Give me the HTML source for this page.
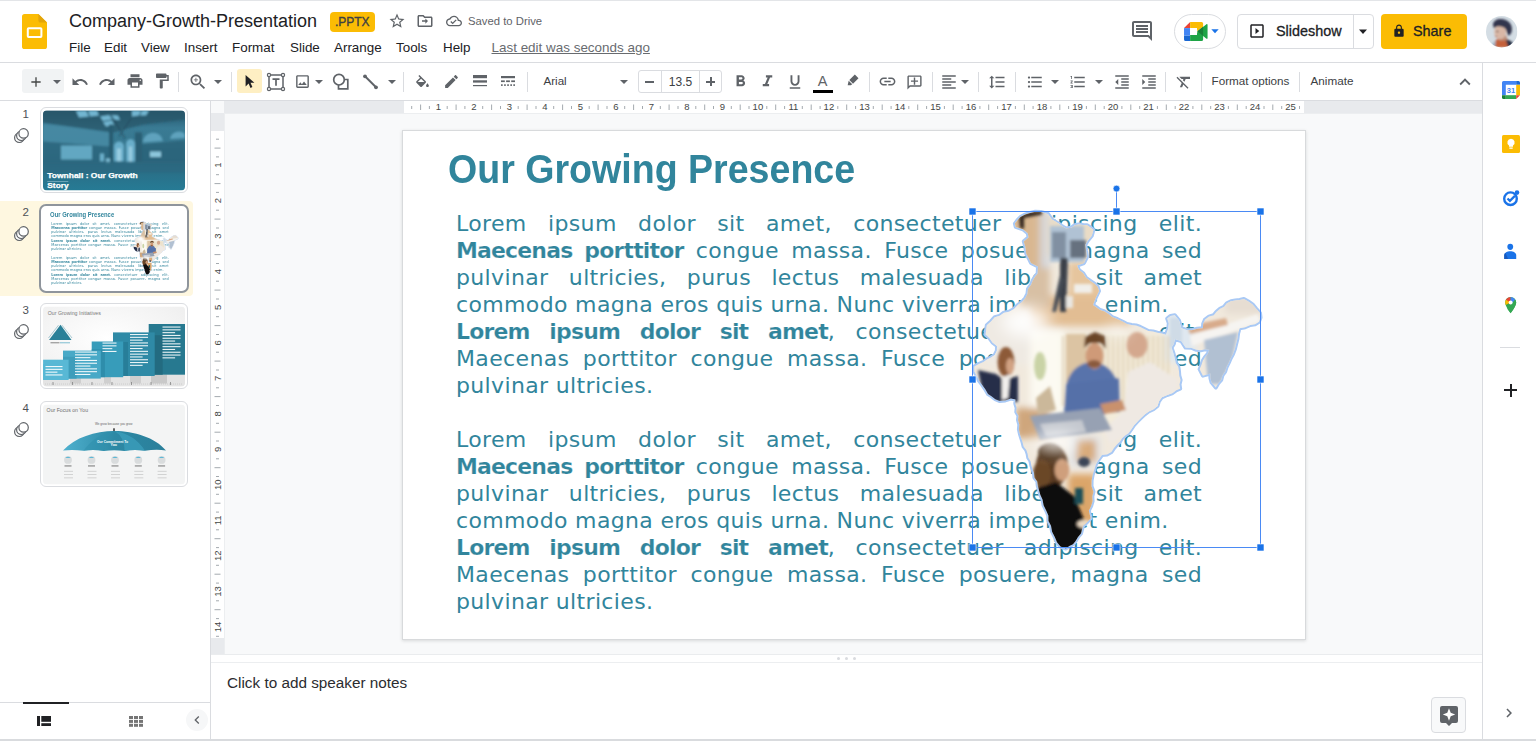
<!DOCTYPE html>
<html lang="en">
<head>
<meta charset="utf-8">
<title>Company-Growth-Presentation - Google Slides</title>
<style>
*{box-sizing:border-box;margin:0;padding:0}
html,body{width:1536px;height:741px;overflow:hidden;background:#fff}
body{position:relative;font-family:"Liberation Sans",Arial,sans-serif;color:#202124;-webkit-font-smoothing:antialiased}
.abs{position:absolute}
svg{display:block;overflow:visible}
/* ---------- header ---------- */
#topline{left:0;top:0;width:1536px;height:1px;background:#e3e5e8}
#header{left:0;top:0;width:1536px;height:62px;background:#fff}
#hdrline{left:0;top:62px;width:1536px;height:1px;background:#dadce0}
#doctitle{left:69px;top:10.4px;font-size:18px;line-height:22px;color:#202124;white-space:nowrap}
#badge{left:330px;top:12px;width:44.5px;height:20px;border-radius:4px;background:#fbbc04;color:#3c4043;font-size:12px;font-weight:normal;-webkit-text-stroke:.35px #3c4043;line-height:21.4px;text-align:center;letter-spacing:0}
#saved{left:468px;top:14px;font-size:11.3px;line-height:14px;color:#5f6368;white-space:nowrap}
.menu{top:39.8px;font-size:13.4px;line-height:16px;color:#202124;white-space:nowrap}
#lastedit{left:491.5px;top:39.8px;font-size:13.45px;line-height:16px;color:#686b6f;text-decoration:underline;white-space:nowrap}
/* ---------- toolbar ---------- */
#toolbar{left:0;top:63px;width:1482px;height:37px;background:#fff}
#tbline{left:0;top:100px;width:1482px;height:1px;background:#dadce0}
.sep{top:72px;width:1px;height:20px;background:#dadce0}
.tbtxt{font-size:12px;line-height:14px;color:#3c4043;white-space:nowrap}
/* ---------- filmstrip ---------- */
#film{left:0;top:101px;width:210px;height:640px;background:#fff}
#filmborder{left:210px;top:101px;width:1px;height:640px;background:#dadce0}
.num{width:29px;text-align:right;font-size:11.5px;line-height:14px;color:#4d5156}
.thumbbox{width:148px;height:86px;border:1px solid #dadce0;border-radius:6px;background:#fff}
.thumbimg{width:142px;height:80px;border-radius:4px;overflow:hidden}
/* ---------- canvas ---------- */
#canvas{left:211px;top:101px;width:1271px;height:554px;background:#f8f9fa}
#slide{left:403px;top:131px;width:902px;height:507.6px;background:#fff;box-shadow:0 0 0 1px #d8dadc,0 1px 3px 1px rgba(60,64,67,.17)}
.bl{position:absolute;left:53px;width:746px;height:27px;font-family:"DejaVu Sans","Liberation Sans",sans-serif;font-size:22px;line-height:27px;color:#31859c;white-space:nowrap;text-align:justify;text-align-last:justify;letter-spacing:.35px}
.bl.last{text-align:left;text-align-last:left}
.bl b{letter-spacing:-.85px;font-weight:bold;-webkit-text-stroke:.2px #fff}
.stitle{position:absolute;left:44.6px;top:16.2px;font-family:"Liberation Sans",Arial,sans-serif;font-weight:bold;font-size:40.1px;line-height:44px;color:#31859c;white-space:nowrap;transform:scaleX(.9375);transform-origin:0 0}
.mini{position:absolute;left:0;top:0;width:902px;height:507px;transform:scale(.15743);transform-origin:0 0}
/* ---------- notes ---------- */
#notes{left:211px;top:655px;width:1271px;height:86px;background:#fff}
/* ---------- side panel ---------- */
#side{left:1483px;top:63px;width:53px;height:678px;background:#fff}
#sideborder{left:1482px;top:63px;width:1px;height:678px;background:#dadce0}
#bottomline{left:0;top:739px;width:1536px;height:2px;background:#d9dbde}
</style>
</head>
<body>
<div class="abs" id="header"></div>
<div class="abs" id="topline"></div>
<div class="abs" id="hdrline"></div>
<!-- slides logo -->
<svg class="abs" style="left:22px;top:14px" width="25" height="35" viewBox="0 0 25 35">
  <path d="M2.6 0H16.4L25 8.6V32.4a2.6 2.6 0 0 1-2.6 2.6H2.6A2.6 2.6 0 0 1 0 32.4V2.600a2.6 2.6 0 0 1 2.600-2.600z" fill="#fbbc04"/>
  <path d="M16.4 0L25 8.600H18.600a2.200 2.200 0 0 1-2.200-2.200z" fill="#e2a50a"/>
  <rect x="5.800" y="14.300" width="13.600" height="8.800" rx="0.800" fill="none" stroke="#fff" stroke-width="2"/>
</svg>
<div class="abs" id="doctitle">Company-Growth-Presentation</div>
<div class="abs" id="badge">.PPTX</div>
<svg class="abs" style="left:388px;top:12px" width="18" height="18" viewBox="0 0 24 24" fill="#5f6368"><path d="M22 9.240l-7.190-.62L12 2 9.190 8.630 2 9.240l5.460 4.730L5.820 21 12 17.270 18.180 21l-1.630-7.030L22 9.240zM12 15.400l-3.760 2.270 1-4.280-3.320-2.880 4.380-.38L12 6.100l1.710 4.040 4.380.38-3.320 2.880 1 4.280L12 15.400z"/></svg>
<svg class="abs" style="left:416px;top:12px" width="18" height="18" viewBox="0 0 24 24" fill="#5f6368"><path d="M20 6h-8l-2-2H4c-1.100 0-2 .9-2 2v12c0 1.100.9 2 2 2h16c1.100 0 2-.9 2-2V8c0-1.100-.9-2-2-2zm0 12H4V6h5.170l2 2H20v10zm-7.500-2.500l3.500-3.500-3.500-3.500v2.500H8v2h4.500v2.500z"/></svg>
<svg class="abs" style="left:446px;top:13.200px" width="16" height="16" viewBox="0 0 24 24" fill="#5f6368"><path d="M19.350 10.040C18.670 6.590 15.640 4 12 4 9.110 4 6.600 5.640 5.350 8.040 2.340 8.360 0 10.910 0 14c0 3.310 2.690 6 6 6h13c2.760 0 5-2.240 5-5 0-2.640-2.050-4.780-4.650-4.960zM19 18H6c-2.210 0-4-1.790-4-4 0-2.050 1.530-3.760 3.560-3.970l1.070-.11.5-.95C8.080 7.140 9.940 6 12 6c2.620 0 4.880 1.860 5.390 4.430l.3 1.500 1.530.11c1.560.1 2.780 1.410 2.780 2.960 0 1.650-1.350 3-3 3zm-9-3.820l-2.090-2.090L6.500 13.500 10 17l6.010-6.010-1.410-1.410z"/></svg>
<div class="abs" id="saved">Saved to Drive</div>
<div class="abs menu" style="left:69px">File</div>
<div class="abs menu" style="left:104px">Edit</div>
<div class="abs menu" style="left:141px">View</div>
<div class="abs menu" style="left:184px">Insert</div>
<div class="abs menu" style="left:232px">Format</div>
<div class="abs menu" style="left:290px">Slide</div>
<div class="abs menu" style="left:334px">Arrange</div>
<div class="abs menu" style="left:396px">Tools</div>
<div class="abs menu" style="left:443px">Help</div>
<div class="abs" id="lastedit">Last edit was seconds ago</div>
<!-- right side of header -->
<svg class="abs" style="left:1130px;top:19px" width="24" height="24" viewBox="0 0 24 24" fill="#5f6368"><path d="M20 2H4c-1.100 0-2 .9-2 2v12c0 1.100.9 2 2 2h14l4 4V4c0-1.100-.9-2-2-2zm0 15.170L18.830 16H4V4h16v13.170zM6 6h12v2H6zm0 3h12v2H6zm0 3h12v2H6z"/></svg>
<div class="abs" style="left:1174px;top:14px;width:52px;height:35px;border:1px solid #dadce0;border-radius:18px;background:#fff"></div>
<!-- meet icon -->
<svg class="abs" style="left:1184px;top:22px" width="23.700" height="19" viewBox="0 0 24 19.300">
  <path d="M0 6.200L6.200 0V6.200z" fill="#ea4335"/>
  <path d="M6.200 0H17.800A1.600 1.600 0 0 1 19.400 1.600V4.800L13.600 9.400 13 6.200H6.200z" fill="#fbbc04"/>
  <path d="M0 6.200H6.200V13.900H0z" fill="#4285f4"/>
  <path d="M0 13.900H6.200V19.300H1.600A1.600 1.600 0 0 1 0 17.700z" fill="#1967d2"/>
  <path d="M6.200 13.200H13L13.600 9.400 22.800 2.200C23.300 1.800 23.900 2.100 23.900 2.700V16.400C23.900 17 23.300 17.300 22.800 16.900L19.400 14.200V17.700A1.600 1.600 0 0 1 17.800 19.300H6.200z" fill="#1ea446"/>
  <path d="M13.600 9.400L19.400 4.800V14.200z" fill="#188038"/>
  <rect x="6.200" y="6.200" width="6.900" height="7" fill="#fff"/>
</svg>
<svg class="abs" style="left:1211px;top:29px" width="8" height="5" viewBox="0 0 8 5"><path d="M.3 .3h7.400L4 4.300z" fill="#1a73e8"/></svg>
<div class="abs" style="left:1237px;top:14px;width:137px;height:35px;border:1px solid #dadce0;border-radius:4px;background:#fff"></div>
<div class="abs" style="left:1353px;top:15px;width:1px;height:33px;background:#dadce0"></div>
<svg class="abs" style="left:1248px;top:22px" width="18" height="18" viewBox="0 0 24 24" fill="#202124"><path d="M10 8v8l5-4-5-4zm9-5H5c-1.100 0-2 .9-2 2v14c0 1.100.9 2 2 2h14c1.100 0 2-.9 2-2V5c0-1.100-.9-2-2-2zm0 16H5V5h14v14z"/></svg>
<div class="abs" style="left:1276px;top:23px;font-size:14.400px;line-height:16px;color:#202124;white-space:nowrap;-webkit-text-stroke:.3px #202124">Slideshow</div>
<svg class="abs" style="left:1358px;top:29px" width="10" height="6" viewBox="0 0 10 6"><path d="M1 .5h8L5 5z" fill="#202124"/></svg>
<div class="abs" style="left:1381px;top:14px;width:86px;height:35px;border-radius:4px;background:#fbbc04"></div>
<svg class="abs" style="left:1392px;top:24px" width="14" height="14" viewBox="0 0 24 24" fill="#202124"><path d="M18 8h-1V6c0-2.760-2.240-5-5-5S7 3.240 7 6v2H6c-1.100 0-2 .9-2 2v10c0 1.100.9 2 2 2h12c1.100 0 2-.9 2-2V10c0-1.100-.9-2-2-2zm-6 9c-1.100 0-2-.9-2-2s.9-2 2-2 2 .9 2 2-.9 2-2 2zm3.100-9H8.900V6c0-1.710 1.390-3.100 3.100-3.100 1.710 0 3.100 1.390 3.100 3.100v2z"/></svg>
<div class="abs" style="left:1413px;top:23px;font-size:14.400px;line-height:16px;color:#202124;white-space:nowrap;-webkit-text-stroke:.3px #202124">Share</div>
<!-- avatar -->
<svg class="abs" style="left:1486px;top:16px" width="31.400" height="31.400" viewBox="0 0 31 31">
  <defs><clipPath id="avc"><circle cx="15.500" cy="15.500" r="15.500"/></clipPath>
  <filter id="avb" x="-20%" y="-20%" width="140%" height="140%"><feGaussianBlur stdDeviation=".8"/></filter></defs>
  <g clip-path="url(#avc)">
    <rect width="31" height="31" fill="#d4dde4"/>
    <g filter="url(#avb)">
      <path d="M8.500 31L9.500 24 14 21 20 22 25 26 27 31z" fill="#c5613b"/>
      <path d="M19 22L25.500 25.500 28 31H22z" fill="#2b3549"/>
      <path d="M6 28L9.500 24 9 31H5z" fill="#9fb4c6"/>
      <path d="M12 19h8l1 5-8 .5z" fill="#b98a74"/>
      <ellipse cx="14" cy="16" rx="5.800" ry="7" fill="#d9b7a6"/>
      <path d="M6.800 8.500C7.500 4 12 2 17 3.200S26 8 25.600 13.500C25.400 16.500 24 19 22 19.500L19.500 13C17 10.500 13 9.500 9.500 10.800L8 12.500z" fill="#33364e"/>
      <ellipse cx="11.200" cy="15.300" rx="1.100" ry=".8" fill="#4a3a3a"/>
      <ellipse cx="10" cy="20" rx="1.400" ry=".6" fill="#a8665a"/>
    </g>
  </g>
</svg>

<div class="abs" id="toolbar"></div><div class="abs" id="tbline"></div>
<div class="abs" style="left:22px;top:69px;width:42px;height:24px;border-radius:3px;background:#f1f3f4"></div>
<svg class="abs" style="left:27.5px;top:73.5px" width="16" height="16" viewBox="0 0 24 24" fill="#444746"><path d="M19 13h-6v6h-2v-6H5v-2h6V5h2v6h6v2z"/></svg>
<svg class="abs" style="left:52.5px;top:80.0px" width="8" height="4" viewBox="0 0 8 4"><path d="M0 0h8L4 4z" fill="#5f6368"/></svg>
<svg class="abs" style="left:71.0px;top:72.5px" width="18" height="18" viewBox="0 0 24 24" fill="#5f6368"><path d="M12.500 8c-2.650 0-5.050.99-6.900 2.600L2 7v9h9l-3.620-3.620c1.390-1.160 3.160-1.880 5.120-1.880 3.540 0 6.550 2.310 7.600 5.500l2.370-.78C21.080 11.030 17.150 8 12.500 8z"/></svg>
<svg class="abs" style="left:98.3px;top:72.5px" width="18" height="18" viewBox="0 0 24 24" fill="#5f6368"><path d="M18.400 10.600C16.550 8.990 14.150 8 11.500 8c-4.650 0-8.580 3.030-9.960 7.220L3.900 16c1.050-3.190 4.050-5.500 7.600-5.500 1.950 0 3.730.72 5.120 1.880L13 16h9V7l-3.600 3.600z"/></svg>
<svg class="abs" style="left:125.6px;top:72.4px" width="18" height="18" viewBox="0 0 24 24" fill="#5f6368"><path d="M19 8H5c-1.660 0-3 1.340-3 3v6h4v4h12v-4h4v-6c0-1.660-1.340-3-3-3zm-3 11H8v-5h8v5zm3-7c-.55 0-1-.45-1-1s.45-1 1-1 1 .45 1 1-.45 1-1 1zm-1-9H6v4h12V3z"/></svg>
<svg class="abs" style="left:153.0px;top:72.4px" width="18" height="18" viewBox="0 0 24 24" fill="#5f6368"><path d="M18 4V3c0-.55-.45-1-1-1H5c-.55 0-1 .45-1 1v4c0 .55.45 1 1 1h12c.55 0 1-.45 1-1V6h1v4H9v11c0 .55.45 1 1 1h2c.55 0 1-.45 1-1v-9h8V4h-3z"/></svg>
<div class="abs sep" style="left:178px"></div>
<svg class="abs" style="left:188.3px;top:72.3px" width="20" height="20" viewBox="0 0 24 24" fill="#5f6368"><path d="M15.500 14h-.79l-.28-.27C15.410 12.590 16 11.110 16 9.500 16 5.910 13.090 3 9.500 3S3 5.910 3 9.500 5.910 16 9.500 16c1.610 0 3.090-.59 4.230-1.570l.27.28v.79l5 4.990L20.490 19l-4.990-5zm-6 0C7.010 14 5 11.990 5 9.500S7.010 5 9.500 5 14 7.010 14 9.500 11.990 14 9.500 14zm2.500-4h-2v2H9v-2H7V9h2V7h1v2h2v1z"/></svg>
<svg class="abs" style="left:214.0px;top:80.0px" width="8" height="4" viewBox="0 0 8 4"><path d="M0 0h8L4 4z" fill="#5f6368"/></svg>
<div class="abs sep" style="left:231px"></div>
<div class="abs" style="left:237px;top:69px;width:25px;height:24px;border-radius:3px;background:#feefc3"></div>
<svg class="abs" style="left:240px;top:72px" width="18" height="18" viewBox="0 0 18 18"><path d="M5.600 3v11.400l3-2.800 1.900 4.300 1.900-.85-1.900-4.200h3.900z" fill="#202124"/></svg>
<svg class="abs" style="left:266px;top:71.500px" width="20" height="20" viewBox="0 0 20 20" fill="none" stroke="#5f6368"><rect x="3" y="3" width="14" height="14" stroke-width="1.500"/><g fill="#fff" stroke-width="1.200"><circle cx="3" cy="3" r="1.600"/><circle cx="17" cy="3" r="1.600"/><circle cx="3" cy="17" r="1.600"/><circle cx="17" cy="17" r="1.600"/></g><path d="M6.500 7.200h7M10 7.200v6.500" stroke-width="1.700"/></svg>
<svg class="abs" style="left:293.8px;top:73.0px" width="17" height="17" viewBox="0 0 24 24" fill="#5f6368"><path d="M19 5v14H5V5h14m0-2H5c-1.100 0-2 .9-2 2v14c0 1.100.9 2 2 2h14c1.100 0 2-.9 2-2V5c0-1.100-.9-2-2-2zm-4.860 8.860l-3 3.870L9 13.140 6 17h12l-3.860-5.140z"/></svg>
<svg class="abs" style="left:314.5px;top:80.0px" width="8" height="4" viewBox="0 0 8 4"><path d="M0 0h8L4 4z" fill="#5f6368"/></svg>
<svg class="abs" style="left:331px;top:72px" width="19" height="19" viewBox="0 0 19 19" fill="none" stroke="#5f6368" stroke-width="1.700"><path d="M7.500 12.500v4.300h9.300V7.500h-3"/><circle cx="8" cy="7.700" r="5.300" fill="#fff"/></svg>
<svg class="abs" style="left:361px;top:72px" width="19" height="19" viewBox="0 0 19 19"><path d="M4 4.300L15 15.300" stroke="#5f6368" stroke-width="2"/><circle cx="4" cy="4.300" r="1.900" fill="#5f6368"/><circle cx="15" cy="15.300" r="1.900" fill="#5f6368"/></svg>
<svg class="abs" style="left:387.5px;top:80.0px" width="8" height="4" viewBox="0 0 8 4"><path d="M0 0h8L4 4z" fill="#5f6368"/></svg>
<div class="abs sep" style="left:403px"></div>
<svg class="abs" style="left:414.0px;top:74.5px" width="17" height="17" viewBox="0 0 24 24" fill="#5f6368"><path d="M16.560 8.940L7.620 0 6.210 1.410l2.380 2.380-5.150 5.150c-.59.59-.59 1.540 0 2.120l5.500 5.500c.29.29.68.44 1.060.44s.77-.15 1.060-.44l5.500-5.500c.59-.58.59-1.530 0-2.120zM5.210 10L10 5.210 14.790 10H5.210zM19 11.500s-2 2.170-2 3.500c0 1.100.9 2 2 2s2-.9 2-2c0-1.330-2-3.500-2-3.500z"/></svg>
<svg class="abs" style="left:442.5px;top:73.0px" width="17" height="17" viewBox="0 0 24 24" fill="#5f6368"><path d="M3 17.250V21h3.750L17.810 9.940l-3.750-3.750L3 17.250zM20.710 7.040c.39-.39.39-1.020 0-1.410l-2.340-2.340c-.39-.39-1.020-.39-1.410 0l-1.830 1.830 3.750 3.750 1.830-1.830z"/></svg>
<svg class="abs" style="left:472.600px;top:75px" width="14" height="13" viewBox="0 0 14 13" fill="#5f6368"><rect y="0" width="14" height="3.200"/><rect y="5.300" width="14" height="2.300"/><rect y="10" width="14" height="1.200"/></svg>
<svg class="abs" style="left:500.700px;top:76px" width="14" height="11" viewBox="0 0 14 11" fill="#5f6368"><rect y="0" width="14" height="2.200"/><rect y="4.400" width="3.800" height="1.700"/><rect x="5.100" y="4.400" width="3.800" height="1.700"/><rect x="10.200" y="4.400" width="3.800" height="1.700"/><rect y="8.300" width="1.700" height="1.600"/><rect x="3.100" y="8.300" width="1.700" height="1.600"/><rect x="6.200" y="8.300" width="1.700" height="1.600"/><rect x="9.300" y="8.300" width="1.700" height="1.600"/><rect x="12.300" y="8.300" width="1.700" height="1.600"/></svg>
<div class="abs sep" style="left:527px"></div>
<div class="abs tbtxt" style="left:543.500px;top:74px;font-size:11.600px">Arial</div>
<svg class="abs" style="left:620.0px;top:80.0px" width="8" height="4" viewBox="0 0 8 4"><path d="M0 0h8L4 4z" fill="#5f6368"/></svg>
<div class="abs" style="left:638px;top:70px;width:84px;height:23px;border:1px solid #dadce0;border-radius:3px"></div>
<div class="abs" style="left:661px;top:71px;width:1px;height:21px;background:#dadce0"></div>
<div class="abs" style="left:699px;top:71px;width:1px;height:21px;background:#dadce0"></div>
<div class="abs" style="left:645px;top:80.500px;width:9px;height:2px;background:#5f6368"></div>
<div class="abs tbtxt" style="left:662px;top:75px;width:37px;text-align:center;font-size:12px">13.5</div>
<div class="abs" style="left:706px;top:80.500px;width:9px;height:2px;background:#5f6368"></div><div class="abs" style="left:709.500px;top:77px;width:2px;height:9px;background:#5f6368"></div>
<svg class="abs" style="left:731.1px;top:72.0px" width="19" height="19" viewBox="0 0 24 24" fill="#5f6368"><path d="M15.600 10.790c.97-.67 1.650-1.770 1.650-2.790 0-2.260-1.750-4-4-4H7v14h7.040c2.090 0 3.710-1.700 3.710-3.790 0-1.520-.86-2.820-2.150-3.420zM10 6.500h3c.83 0 1.500.67 1.500 1.500s-.67 1.500-1.500 1.500h-3v-3zm3.500 9H10v-3h3.500c.83 0 1.500.67 1.500 1.500s-.67 1.500-1.500 1.500z"/></svg>
<svg class="abs" style="left:758.0px;top:72.0px" width="19" height="19" viewBox="0 0 24 24" fill="#5f6368"><path d="M10 4v3h2.210l-3.420 8H6v3h8v-3h-2.210l3.420-8H18V4z"/></svg>
<svg class="abs" style="left:785.6px;top:73.0px" width="18" height="18" viewBox="0 0 24 24" fill="#5f6368"><path d="M12 17c3.310 0 6-2.690 6-6V3h-2.500v8c0 1.930-1.570 3.500-3.500 3.500S8.500 12.930 8.500 11V3H6v8c0 3.310 2.690 6 6 6zm-7 2v2h14v-2H5z"/></svg>
<div class="abs" style="left:812px;top:72.500px;width:21px;text-align:center;font-size:14.500px;line-height:16px;color:#5f6368">A</div>
<div class="abs" style="left:812.500px;top:89.500px;width:20px;height:3px;background:#000"></div>
<svg class="abs" style="left:844.500px;top:73px" width="15" height="15" viewBox="0 0 18 18" fill="#5f6368"><path d="M11.800 1.800l4.400 4.400-6.600 6.600-4.400-4.400zM4.400 9.300l4.300 4.300-1.800 1.200-3.700.0z"/></svg>
<div class="abs sep" style="left:869px"></div>
<svg class="abs" style="left:877.9px;top:72.0px" width="19" height="19" viewBox="0 0 24 24" fill="#5f6368"><path d="M3.900 12c0-1.710 1.390-3.100 3.100-3.100h4V7H7c-2.760 0-5 2.240-5 5s2.240 5 5 5h4v-1.900H7c-1.710 0-3.100-1.390-3.100-3.100zM8 13h8v-2H8v2zm9-6h-4v1.900h4c1.710 0 3.100 1.390 3.100 3.100s-1.390 3.100-3.100 3.100h-4V17h4c2.760 0 5-2.240 5-5s-2.240-5-5-5z"/></svg>
<svg class="abs" style="left:905.5px;top:73.5px" width="17" height="17" viewBox="0 0 24 24" fill="#5f6368"><path d="M2 4c0-1.100.9-2 2-2h16c1.100 0 2 .9 2 2v12c0 1.100-.9 2-2 2H6l-4 4V4zm2 13.170L5.170 16H20V4H4v13.170zM11 5h2v4h4v2h-4v4h-2v-4H7V9h4z"/></svg>
<div class="abs sep" style="left:932px"></div>
<svg class="abs" style="left:939.7px;top:72.5px" width="18" height="18" viewBox="0 0 24 24" fill="#5f6368"><path d="M15 15H3v2h12v-2zm0-8H3v2h12V7zM3 13h18v-2H3v2zm0 8h18v-2H3v2zM3 3v2h18V3H3z"/></svg>
<svg class="abs" style="left:961.2px;top:80.0px" width="8" height="4" viewBox="0 0 8 4"><path d="M0 0h8L4 4z" fill="#5f6368"/></svg>
<div class="abs sep" style="left:978px"></div>
<svg class="abs" style="left:987.7px;top:72.5px" width="18" height="18" viewBox="0 0 24 24" fill="#5f6368"><path d="M6 7h2.500L5 3.500 1.500 7H4v10H1.500L5 20.500 8.500 17H6V7zm4-2v2h12V5H10zm0 14h12v-2H10v2zm0-6h12v-2H10v2z"/></svg>
<div class="abs sep" style="left:1015px"></div>
<svg class="abs" style="left:1025.6px;top:72.5px" width="18" height="18" viewBox="0 0 24 24" fill="#5f6368"><path d="M4 10.500c-.83 0-1.500.67-1.500 1.500s.67 1.500 1.500 1.500 1.500-.67 1.500-1.500-.67-1.500-1.500-1.500zm0-6c-.83 0-1.500.67-1.500 1.500S3.170 7.500 4 7.500 5.500 6.830 5.500 6 4.830 4.500 4 4.500zm0 12c-.83 0-1.500.68-1.500 1.500s.68 1.500 1.500 1.500 1.500-.68 1.500-1.500-.67-1.500-1.500-1.500zM7 19h14v-2H7v2zm0-6h14v-2H7v2zm0-8v2h14V5H7z"/></svg>
<svg class="abs" style="left:1051.0px;top:80.0px" width="8" height="4" viewBox="0 0 8 4"><path d="M0 0h8L4 4z" fill="#5f6368"/></svg>
<svg class="abs" style="left:1069.0px;top:72.5px" width="18" height="18" viewBox="0 0 24 24" fill="#5f6368"><path d="M2 17h2v.5H3v1h1v.5H2v1h3v-4H2v1zm1-9h1V4H2v1h1v3zm-1 3h1.800L2 13.100v.9h3v-1H3.200L5 10.900V10H2v1zm5-6v2h14V5H7zm0 14h14v-2H7v2zm0-6h14v-2H7v2z"/></svg>
<svg class="abs" style="left:1094.7px;top:80.0px" width="8" height="4" viewBox="0 0 8 4"><path d="M0 0h8L4 4z" fill="#5f6368"/></svg>
<svg class="abs" style="left:1112.5px;top:72.5px" width="18" height="18" viewBox="0 0 24 24" fill="#5f6368"><path d="M11 17h10v-2H11v2zm-8-5l4 4V8l-4 4zm0 9h18v-2H3v2zM3 3v2h18V3H3zm8 6h10V7H11v2zm0 4h10v-2H11v2z"/></svg>
<svg class="abs" style="left:1139.5px;top:72.5px" width="18" height="18" viewBox="0 0 24 24" fill="#5f6368"><path d="M3 21h18v-2H3v2zM3 8v8l4-4-4-4zm8 9h10v-2H11v2zM3 3v2h18V3H3zm8 6h10V7H11v2zm0 4h10v-2H11v2z"/></svg>
<div class="abs sep" style="left:1165px"></div>
<svg class="abs" style="left:1175.0px;top:72.5px" width="18" height="18" viewBox="0 0 24 24" fill="#5f6368"><path d="M3.270 5L2 6.270l6.970 6.970L6.500 19h3l1.570-3.660L16.730 21 18 19.730 3.550 5.270 3.270 5zM6 5v.18L8.820 8h2.400l-.72 1.680 2.100 2.100L14.210 8H20V5H6z"/></svg>
<div class="abs sep" style="left:1201px"></div>
<div class="abs tbtxt" style="left:1211.500px;top:74px;font-size:11.700px">Format options</div>
<div class="abs sep" style="left:1299px"></div>
<div class="abs tbtxt" style="left:1310.500px;top:74px;font-size:11.700px">Animate</div>
<svg class="abs" style="left:1453.8px;top:70.5px" width="22" height="22" viewBox="0 0 24 24" fill="#5f6368"><path d="M12 8l-6 6 1.410 1.410L12 10.830l4.590 4.580L18 14z"/></svg>

<div class="abs" id="film"></div><div class="abs" id="filmborder"></div>
<div class="abs" style="left:0;top:201px;width:193px;height:95px;background:#fef7e0;border-radius:0 4px 4px 0"></div>
<div class="abs num" style="left:0;top:106.8px">1</div>
<svg class="abs" style="left:13px;top:127.2px" width="17" height="17" viewBox="0 0 17 17" fill="#fff" stroke="#5f6368" stroke-width="1.200"><circle cx="6.300" cy="10.800" r="4.700"/><circle cx="8.300" cy="8.800" r="4.700"/><circle cx="10.600" cy="6.400" r="4.700"/></svg>
<div class="abs num" style="left:0;top:204.8px">2</div>
<svg class="abs" style="left:13px;top:225.2px" width="17" height="17" viewBox="0 0 17 17" fill="#fff" stroke="#5f6368" stroke-width="1.200"><circle cx="6.300" cy="10.800" r="4.700"/><circle cx="8.300" cy="8.800" r="4.700"/><circle cx="10.600" cy="6.400" r="4.700"/></svg>
<div class="abs num" style="left:0;top:302.8px">3</div>
<svg class="abs" style="left:13px;top:323.2px" width="17" height="17" viewBox="0 0 17 17" fill="#fff" stroke="#5f6368" stroke-width="1.200"><circle cx="6.300" cy="10.800" r="4.700"/><circle cx="8.300" cy="8.800" r="4.700"/><circle cx="10.600" cy="6.400" r="4.700"/></svg>
<div class="abs num" style="left:0;top:400.8px">4</div>
<svg class="abs" style="left:13px;top:421.2px" width="17" height="17" viewBox="0 0 17 17" fill="#fff" stroke="#5f6368" stroke-width="1.200"><circle cx="6.300" cy="10.800" r="4.700"/><circle cx="8.300" cy="8.800" r="4.700"/><circle cx="10.600" cy="6.400" r="4.700"/></svg>
<div class="abs thumbbox" style="left:40px;top:107px"></div>
<div class="abs" style="left:39px;top:204px;width:150px;height:89px;border:2px solid #8f959c;border-radius:7px;background:#fff"></div>
<div class="abs thumbbox" style="left:40px;top:303px"></div>
<div class="abs thumbbox" style="left:40px;top:401px"></div>
<svg class="abs" style="left:43px;top:110px" width="142" height="81" viewBox="0 -0.5 142 81">
<defs><linearGradient id="t1g" x1="0" y1="0" x2="0" y2="1"><stop offset="0" stop-color="#24546a"/><stop offset=".22" stop-color="#3a7b94"/><stop offset=".42" stop-color="#37778f"/><stop offset=".66" stop-color="#2c6a82"/><stop offset="1" stop-color="#267b95"/></linearGradient>
<clipPath id="t1c"><rect width="142" height="80" rx="4"/></clipPath>
<filter id="t1b" x="-20%" y="-20%" width="140%" height="140%"><feGaussianBlur stdDeviation=".8"/></filter></defs>
<g clip-path="url(#t1c)"><rect width="142" height="80" fill="url(#t1g)"/>
<g filter="url(#t1b)">
<path d="M0 0H142V9L100 14 70 22 0 12z" fill="#255569" opacity=".75"/>
<path d="M33 .5L43 0 46 6 36 7zM45 0L54 0 56 5 47 6zM57 6L66 4.500 69 9 60 10.500zM67 4.500L75 5 77 9.500 70 9zM60 11.500L69 10 71 14.500 63 16zM89 0L98 0 96 5 89 6zM99 0L106 0 103 5 97 5z" fill="#72b6d1"/>
<path d="M0 13L66 22V36L0 31z" fill="#4a8da7" opacity=".75"/>
<path d="M0 31L66 36V54H0z" fill="#2d667d" opacity=".8"/>
<rect x="18" y="35" width="31" height="14" fill="#62a7c2"/>
<rect x="66" y="14" width="4" height="40" fill="#285c71"/>
<path d="M71 51V36a5 5 0 0 1 10 0V51zM83 52V34a4.500 5.500 0 0 1 9 0V52z" fill="#69aeca"/>
<path d="M74 51V38h4V51zM86 52V36h3V52z" fill="#a5d5e7" opacity=".8"/>
<rect x="92" y="22" width="7" height="31" fill="#2a5f75"/>
<path d="M99 34L142 30V54H99z" fill="#2b637a" opacity=".85"/>
<path d="M100 32a10 9 0 0 1 20-1.500zM127 28.500a9 9 0 0 1 15-5v4z" fill="#5ea2bd"/>
<rect x="107" y="41" width="11" height="5.500" fill="#8cc6dc"/><rect x="57" y="43" width="4" height="8" fill="#6aafca"/><rect x="63" y="48" width="4" height="5" fill="#7dbcd4"/>
<path d="M68 4L82 28M88 8L76 26" stroke="#23485a" stroke-width="1.200" opacity=".7"/>
<rect x="0" y="51" width="142" height="11" fill="#2c6880" opacity=".8"/>
</g>
<text x="4.300" y="67.600" font-family="Liberation Sans,sans-serif" font-weight="bold" font-size="7.200" fill="#fff" stroke="#fff" stroke-width=".25" textLength="90.500" lengthAdjust="spacingAndGlyphs">Townhall : Our Growth</text>
<text x="4.300" y="77.400" font-family="Liberation Sans,sans-serif" font-weight="bold" font-size="7.200" fill="#fff" stroke="#fff" stroke-width=".25" textLength="21.300" lengthAdjust="spacingAndGlyphs">Story</text>
<rect x="4.300" y="70.700" width="21" height=".5" fill="#cfe6ee" opacity=".8"/>
</g></svg>
<div class="abs" style="left:43px;top:208px;width:142px;height:81px;overflow:hidden;border-radius:4px;background:#fff"><div class="mini" style="top:.5px"><div class="stitle">Our Growing Presence</div>
<div class="bl" style="top:79.2px">Lorem ipsum dolor sit amet, consectetuer adipiscing elit.</div>
<div class="bl" style="top:106.2px"><b>Maecenas porttitor</b> congue massa. Fusce posuere, magna sed</div>
<div class="bl" style="top:133.2px">pulvinar ultricies, purus lectus malesuada libero, sit amet</div>
<div class="bl last" style="top:160.2px">commodo magna eros quis urna. Nunc viverra imperdiet enim.</div>
<div class="bl" style="top:187.2px"><b>Lorem ipsum dolor sit amet</b>, consectetuer adipiscing elit.</div>
<div class="bl" style="top:214.2px">Maecenas porttitor congue massa. Fusce posuere, magna sed</div>
<div class="bl last" style="top:241.2px">pulvinar ultricies.</div>
<div class="bl" style="top:295.2px">Lorem ipsum dolor sit amet, consectetuer adipiscing elit.</div>
<div class="bl" style="top:322.2px"><b>Maecenas porttitor</b> congue massa. Fusce posuere, magna sed</div>
<div class="bl" style="top:349.2px">pulvinar ultricies, purus lectus malesuada libero, sit amet</div>
<div class="bl last" style="top:376.2px">commodo magna eros quis urna. Nunc viverra imperdiet enim.</div>
<div class="bl" style="top:403.2px"><b>Lorem ipsum dolor sit amet</b>, consectetuer adipiscing elit.</div>
<div class="bl" style="top:430.2px">Maecenas porttitor congue massa. Fusce posuere, magna sed</div>
<div class="bl last" style="top:457.2px">pulvinar ultricies.</div><svg class="abs" style="left:0;top:0" width="902" height="507" viewBox="0 0 902 507"><use href="#india"/></svg></div></div>
<svg class="abs" style="left:43px;top:306px" width="142" height="81" viewBox="0 -0.5 142 81">
<defs><radialGradient id="t3g" cx=".45" cy=".4" r=".8"><stop offset="0" stop-color="#ffffff"/><stop offset="1" stop-color="#ececec"/></radialGradient><clipPath id="t3c"><rect width="142" height="80" rx="4"/></clipPath></defs>
<g clip-path="url(#t3c)"><rect width="142" height="80" fill="url(#t3g)"/>
<text x="4.800" y="8" font-family="Liberation Sans,sans-serif" font-size="5.600" fill="#7a7a7a" textLength="53" lengthAdjust="spacingAndGlyphs">Our Growing Initiatives</text>
<path d="M6 33.500L17.500 18.200 28.500 33.500z" fill="#2a8098"/><path d="M5.500 31.500L15.500 18.700M19 18.700L29 31.500" stroke="#2a8098" stroke-width=".4"/>
<rect x="7.500" y="36" width="9" height=".7" fill="#555"/><rect x="17" y="36" width="10" height=".7" fill="#4aa3bf"/>
<rect x="0" y="68" width="142" height="12" fill="#e4e4e4"/>
<rect x="27" y="68" width="11" height="9" fill="#cfcfcf"/><rect x="61" y="68" width="7" height="9" fill="#cfcfcf"/><rect x="87" y="68" width="11" height="9" fill="#cfcfcf"/><rect x="108" y="68" width="16" height="9" fill="#c9c9c9"/>
<rect x="105.7" y="17.5" width="36.8" height="50.7" fill="#277990"/><rect x="105.7" y="28.7" width="14.0" height="39.5" fill="#236b80"/>
<rect x="70.0" y="25.9" width="41.7" height="43.6" fill="#2f8aa6"/><rect x="70.0" y="35.5" width="15.0" height="34.0" fill="#277e99"/>
<rect x="48.7" y="35.0" width="31.5" height="35.7" fill="#379cba"/><rect x="48.7" y="42.9" width="13.2" height="27.8" fill="#2e8dab"/>
<rect x="20.0" y="44.1" width="37.8" height="28.0" fill="#48a9c7"/><rect x="20.0" y="50.3" width="13.6" height="21.8" fill="#3d9dbb"/>
<rect x="0.1" y="53.2" width="25.5" height="20.3" fill="#58b8d5"/><rect x="0.1" y="57.7" width="9.2" height="15.8" fill="#58b8d5"/>
<rect x="2.5" y="59.5" width="17.0" height="1.100" fill="#fff" opacity=".9"/><rect x="2.5" y="62.3" width="17.0" height="1.100" fill="#fff" opacity=".9"/><rect x="2.5" y="65.1" width="11.9" height="1.100" fill="#fff" opacity=".9"/><rect x="2.5" y="67.9" width="17.0" height="1.100" fill="#fff" opacity=".9"/><rect x="32.0" y="45.0" width="22.0" height="1.100" fill="#fff" opacity=".9"/><rect x="32.0" y="47.8" width="22.0" height="1.100" fill="#fff" opacity=".9"/><rect x="32.0" y="50.6" width="15.4" height="1.100" fill="#fff" opacity=".9"/><rect x="32.0" y="53.4" width="22.0" height="1.100" fill="#fff" opacity=".9"/><rect x="32.0" y="56.2" width="22.0" height="1.100" fill="#fff" opacity=".9"/><rect x="32.0" y="59.0" width="15.4" height="1.100" fill="#fff" opacity=".9"/><rect x="32.0" y="61.8" width="22.0" height="1.100" fill="#fff" opacity=".9"/><rect x="32.0" y="64.6" width="22.0" height="1.100" fill="#fff" opacity=".9"/><rect x="32.0" y="67.4" width="15.4" height="1.100" fill="#fff" opacity=".9"/><rect x="59.5" y="36.0" width="14.0" height="1.100" fill="#fff" opacity=".9"/><rect x="59.5" y="38.8" width="14.0" height="1.100" fill="#fff" opacity=".9"/><rect x="59.5" y="41.6" width="9.8" height="1.100" fill="#fff" opacity=".9"/><rect x="59.5" y="44.4" width="14.0" height="1.100" fill="#fff" opacity=".9"/><rect x="87.0" y="27.5" width="18.0" height="1.100" fill="#fff" opacity=".9"/><rect x="87.0" y="30.3" width="18.0" height="1.100" fill="#fff" opacity=".9"/><rect x="87.0" y="33.1" width="12.6" height="1.100" fill="#fff" opacity=".9"/><rect x="87.0" y="35.9" width="18.0" height="1.100" fill="#fff" opacity=".9"/><rect x="87.0" y="38.7" width="18.0" height="1.100" fill="#fff" opacity=".9"/><rect x="87.0" y="41.5" width="12.6" height="1.100" fill="#fff" opacity=".9"/><rect x="87.0" y="44.3" width="18.0" height="1.100" fill="#fff" opacity=".9"/><rect x="87.0" y="47.1" width="18.0" height="1.100" fill="#fff" opacity=".9"/><rect x="87.0" y="49.9" width="12.6" height="1.100" fill="#fff" opacity=".9"/><rect x="87.0" y="52.7" width="18.0" height="1.100" fill="#fff" opacity=".9"/><rect x="87.0" y="55.5" width="18.0" height="1.100" fill="#fff" opacity=".9"/><rect x="87.0" y="58.3" width="12.6" height="1.100" fill="#fff" opacity=".9"/><rect x="119.5" y="20.0" width="18.0" height="1.100" fill="#fff" opacity=".9"/><rect x="119.5" y="22.8" width="18.0" height="1.100" fill="#fff" opacity=".9"/><rect x="119.5" y="25.6" width="12.6" height="1.100" fill="#fff" opacity=".9"/><rect x="119.5" y="28.4" width="18.0" height="1.100" fill="#fff" opacity=".9"/><rect x="119.5" y="31.2" width="18.0" height="1.100" fill="#fff" opacity=".9"/><rect x="119.5" y="34.0" width="12.6" height="1.100" fill="#fff" opacity=".9"/><rect x="119.5" y="36.8" width="18.0" height="1.100" fill="#fff" opacity=".9"/><rect x="119.5" y="39.6" width="18.0" height="1.100" fill="#fff" opacity=".9"/><rect x="119.5" y="42.4" width="12.6" height="1.100" fill="#fff" opacity=".9"/><rect x="119.5" y="45.2" width="18.0" height="1.100" fill="#fff" opacity=".9"/><rect x="119.5" y="48.0" width="18.0" height="1.100" fill="#fff" opacity=".9"/><rect x="119.5" y="50.8" width="12.6" height="1.100" fill="#fff" opacity=".9"/>
<rect x="46" y="361" width="4" height="4.500" fill="#3e5560"/>
<path d="M2 77.500h138" stroke="#8a8a8a" stroke-width=".5" stroke-dasharray=".5 1.500"/>
<path d="M10 75.500v3M29.500 75.500v3M49 75.500v3M69 75.500v3M88.500 75.500v3M108 75.500v3M127.500 75.500v3" stroke="#777" stroke-width=".7"/>
</g></svg>
<svg class="abs" style="left:43px;top:404px" width="142" height="81" viewBox="0 -0.5 142 81">
<defs><linearGradient id="t4g" x1="0" y1="0" x2="1" y2="0"><stop offset="0" stop-color="#4fb1cf"/><stop offset=".5" stop-color="#2d89a5"/><stop offset="1" stop-color="#2a7f9a"/></linearGradient><clipPath id="t4c"><rect width="142" height="80" rx="4"/></clipPath></defs>
<g clip-path="url(#t4c)"><rect width="142" height="80" fill="#f3f4f4"/>
<text x="3.600" y="7.900" font-family="Liberation Sans,sans-serif" font-size="5.600" fill="#6f6f6f" textLength="41.500" lengthAdjust="spacingAndGlyphs">Our Focus on You</text>
<text x="52" y="20.600" font-family="Liberation Sans,sans-serif" font-size="3.200" fill="#666" textLength="37.500" lengthAdjust="spacingAndGlyphs">We grow because you grow</text>
<rect x="70.300" y="23.800" width="1.400" height="2.800" fill="#222"/>
<path d="M20 46C32 33 52 26.500 71.500 26.500S112 33 123 46Q113 44.500 102 46.300 91 44.800 81.500 46.500 71 45 61 46.500 50.500 44.800 40.500 46.300 30 44.800 20 46z" fill="url(#t4g)"/>
<path d="M71.500 26.500Q52 30 40.500 46.300 50.500 44.800 61 46.500 61.500 33 71.500 26.500z" fill="#2f8fad" opacity=".55"/>
<path d="M71.500 26.500Q82 33 81.500 46.500 91 44.800 102 46.300 92 30 71.500 26.500z" fill="#3fa5c3" opacity=".6"/>
<text x="54" y="38" font-family="Liberation Sans,sans-serif" font-weight="bold" font-size="3.600" fill="#fff" textLength="31" lengthAdjust="spacingAndGlyphs">Our Commitment To</text>
<text x="67.500" y="41.500" font-family="Liberation Sans,sans-serif" font-weight="bold" font-size="3.600" fill="#fff">You</text>
<circle cx="25.0" cy="55.400" r="3.900" fill="#d9dcdd"/><path d="M22.4 53.400a3.400 3.400 0 0 1 5.200 0z" fill="#5fb8d6"/><rect x="21.5" y="61" width="7" height=".9" fill="#666"/><rect x="21.0" y="66.400" width="9" height=".6" fill="#bbb"/><rect x="21.0" y="69.800" width="9" height=".6" fill="#bbb"/><rect x="21.0" y="73.100" width="9" height=".6" fill="#bbb"/><circle cx="48.5" cy="55.400" r="3.900" fill="#d9dcdd"/><path d="M45.9 53.400a3.400 3.400 0 0 1 5.200 0z" fill="#5fb8d6"/><rect x="45.0" y="61" width="7" height=".9" fill="#666"/><rect x="44.5" y="66.400" width="9" height=".6" fill="#bbb"/><rect x="44.5" y="69.800" width="9" height=".6" fill="#bbb"/><rect x="44.5" y="73.100" width="9" height=".6" fill="#bbb"/><circle cx="72.0" cy="55.400" r="3.900" fill="#d9dcdd"/><path d="M69.4 53.400a3.400 3.400 0 0 1 5.200 0z" fill="#5fb8d6"/><rect x="68.5" y="61" width="7" height=".9" fill="#666"/><rect x="68.0" y="66.400" width="9" height=".6" fill="#bbb"/><rect x="68.0" y="69.800" width="9" height=".6" fill="#bbb"/><rect x="68.0" y="73.100" width="9" height=".6" fill="#bbb"/><circle cx="95.3" cy="55.400" r="3.900" fill="#d9dcdd"/><path d="M92.7 53.400a3.400 3.400 0 0 1 5.200 0z" fill="#5fb8d6"/><rect x="91.8" y="61" width="7" height=".9" fill="#666"/><rect x="91.3" y="66.400" width="9" height=".6" fill="#bbb"/><rect x="91.3" y="69.800" width="9" height=".6" fill="#bbb"/><rect x="91.3" y="73.100" width="9" height=".6" fill="#bbb"/><circle cx="118.6" cy="55.400" r="3.900" fill="#d9dcdd"/><path d="M116.0 53.400a3.400 3.400 0 0 1 5.200 0z" fill="#5fb8d6"/><rect x="115.1" y="61" width="7" height=".9" fill="#666"/><rect x="114.6" y="66.400" width="9" height=".6" fill="#bbb"/><rect x="114.6" y="69.800" width="9" height=".6" fill="#bbb"/><rect x="114.6" y="73.100" width="9" height=".6" fill="#bbb"/>
</g></svg>
<div class="abs" style="left:0;top:702px;width:210px;height:1px;background:#dadce0"></div>
<div class="abs" style="left:23px;top:702px;width:46px;height:2px;background:#202124"></div>
<svg class="abs" style="left:37px;top:715.500px" width="14" height="10" viewBox="0 0 14 10" fill="#202124"><rect x="0" y="0" width="3" height="10"/><rect x="4.300" y="0" width="9.700" height="5.800"/><rect x="4.300" y="7.200" width="9.700" height="2.800"/></svg>
<svg class="abs" style="left:129px;top:715.500px" width="14" height="11" viewBox="0 0 14 11" fill="#757575"><rect x="0" y="0.0" width="4" height="3"/><rect x="5" y="0.0" width="4" height="3"/><rect x="10" y="0.0" width="4" height="3"/><rect x="0" y="3.9" width="4" height="3"/><rect x="5" y="3.9" width="4" height="3"/><rect x="10" y="3.9" width="4" height="3"/><rect x="0" y="7.8" width="4" height="3"/><rect x="5" y="7.8" width="4" height="3"/><rect x="10" y="7.8" width="4" height="3"/></svg>
<div class="abs" style="left:186px;top:709px;width:22px;height:22px;border-radius:11px;background:#f6f7f8"></div>
<svg class="abs" style="left:188.500px;top:712px" width="16" height="16" viewBox="0 0 24 24" fill="#5f6368"><path d="M15.410 7.410L14 6l-6 6 6 6 1.410-1.410L10.830 12z"/></svg>
<div class="abs" id="canvas"></div>
<div class="abs" style="left:211px;top:101px;width:1271px;height:12px;background:#e8eaed"></div>
<div class="abs" style="left:211px;top:101px;width:13px;height:12px;background:#f8f9fa"></div>
<div class="abs" style="left:404px;top:101px;width:900px;height:12px;background:#fff"></div>
<div class="abs" style="left:211px;top:113px;width:1271px;height:1px;background:#eceef0"></div>
<div class="abs" style="left:211px;top:113px;width:13px;height:542px;background:#e8eaed"></div>
<div class="abs" style="left:211px;top:131px;width:13px;height:507px;background:#fff"></div>
<div class="abs" style="left:224px;top:113px;width:1px;height:542px;background:#eceef0"></div>
<svg class="abs" style="left:0;top:0" width="1536" height="120" viewBox="0 0 1536 120" font-family="Liberation Sans,sans-serif" font-size="9.500" fill="#444746" stroke="#9aa0a6" stroke-width=".9"><g><path d="M411.7 106v3"/><path d="M420.6 104.500v5.500"/><path d="M429.4 106v3"/><text stroke="none" x="438.3" y="110.300" text-anchor="middle">1</text><path d="M447.2 106v3"/><path d="M456.1 104.500v5.500"/><path d="M464.9 106v3"/><text stroke="none" x="473.8" y="110.300" text-anchor="middle">2</text><path d="M482.7 106v3"/><path d="M491.6 104.500v5.500"/><path d="M500.5 106v3"/><text stroke="none" x="509.3" y="110.300" text-anchor="middle">3</text><path d="M518.2 106v3"/><path d="M527.1 104.500v5.500"/><path d="M536.0 106v3"/><text stroke="none" x="544.8" y="110.300" text-anchor="middle">4</text><path d="M553.7 106v3"/><path d="M562.6 104.500v5.500"/><path d="M571.5 106v3"/><text stroke="none" x="580.4" y="110.300" text-anchor="middle">5</text><path d="M589.2 106v3"/><path d="M598.1 104.500v5.500"/><path d="M607.0 106v3"/><text stroke="none" x="615.9" y="110.300" text-anchor="middle">6</text><path d="M624.7 106v3"/><path d="M633.6 104.500v5.500"/><path d="M642.5 106v3"/><text stroke="none" x="651.4" y="110.300" text-anchor="middle">7</text><path d="M660.3 106v3"/><path d="M669.1 104.500v5.500"/><path d="M678.0 106v3"/><text stroke="none" x="686.9" y="110.300" text-anchor="middle">8</text><path d="M695.8 106v3"/><path d="M704.7 104.500v5.500"/><path d="M713.5 106v3"/><text stroke="none" x="722.4" y="110.300" text-anchor="middle">9</text><path d="M731.3 106v3"/><path d="M740.2 104.500v5.500"/><path d="M749.0 106v3"/><text stroke="none" x="757.9" y="110.300" text-anchor="middle">10</text><path d="M766.8 106v3"/><path d="M775.7 104.500v5.500"/><path d="M784.6 106v3"/><text stroke="none" x="793.4" y="110.300" text-anchor="middle">11</text><path d="M802.3 106v3"/><path d="M811.2 104.500v5.500"/><path d="M820.1 106v3"/><text stroke="none" x="828.9" y="110.300" text-anchor="middle">12</text><path d="M837.8 106v3"/><path d="M846.7 104.500v5.500"/><path d="M855.6 106v3"/><text stroke="none" x="864.5" y="110.300" text-anchor="middle">13</text><path d="M873.3 106v3"/><path d="M882.2 104.500v5.500"/><path d="M891.1 106v3"/><text stroke="none" x="900.0" y="110.300" text-anchor="middle">14</text><path d="M908.8 106v3"/><path d="M917.7 104.500v5.500"/><path d="M926.6 106v3"/><text stroke="none" x="935.5" y="110.300" text-anchor="middle">15</text><path d="M944.4 106v3"/><path d="M953.2 104.500v5.500"/><path d="M962.1 106v3"/><text stroke="none" x="971.0" y="110.300" text-anchor="middle">16</text><path d="M979.9 106v3"/><path d="M988.7 104.500v5.500"/><path d="M997.6 106v3"/><text stroke="none" x="1006.5" y="110.300" text-anchor="middle">17</text><path d="M1015.4 106v3"/><path d="M1024.3 104.500v5.500"/><path d="M1033.1 106v3"/><text stroke="none" x="1042.0" y="110.300" text-anchor="middle">18</text><path d="M1050.9 106v3"/><path d="M1059.8 104.500v5.500"/><path d="M1068.6 106v3"/><text stroke="none" x="1077.5" y="110.300" text-anchor="middle">19</text><path d="M1086.4 106v3"/><path d="M1095.3 104.500v5.500"/><path d="M1104.2 106v3"/><text stroke="none" x="1113.0" y="110.300" text-anchor="middle">20</text><path d="M1121.9 106v3"/><path d="M1130.8 104.500v5.500"/><path d="M1139.7 106v3"/><text stroke="none" x="1148.5" y="110.300" text-anchor="middle">21</text><path d="M1157.4 106v3"/><path d="M1166.3 104.500v5.500"/><path d="M1175.2 106v3"/><text stroke="none" x="1184.1" y="110.300" text-anchor="middle">22</text><path d="M1192.9 106v3"/><path d="M1201.8 104.500v5.500"/><path d="M1210.7 106v3"/><text stroke="none" x="1219.6" y="110.300" text-anchor="middle">23</text><path d="M1228.4 106v3"/><path d="M1237.3 104.500v5.500"/><path d="M1246.2 106v3"/><text stroke="none" x="1255.1" y="110.300" text-anchor="middle">24</text><path d="M1264.0 106v3"/><path d="M1272.8 104.500v5.500"/><path d="M1281.7 106v3"/><text stroke="none" x="1290.6" y="110.300" text-anchor="middle">25</text><path d="M1299.5 106v3"/></g></svg>
<svg class="abs" style="left:0;top:0" width="240" height="741" viewBox="0 0 240 741" font-family="Liberation Sans,sans-serif" font-size="9.500" fill="#444746" stroke="#9aa0a6" stroke-width=".9"><path d="M216 139.2h3"/><path d="M214.500 148.1h6"/><path d="M216 156.9h3"/><text stroke="none" text-anchor="middle" transform="translate(221.300 165.2) rotate(-90)">1</text><path d="M216 174.7h3"/><path d="M214.500 183.6h6"/><path d="M216 192.4h3"/><text stroke="none" text-anchor="middle" transform="translate(221.300 200.7) rotate(-90)">2</text><path d="M216 210.2h3"/><path d="M214.500 219.1h6"/><path d="M216 228.0h3"/><text stroke="none" text-anchor="middle" transform="translate(221.300 236.2) rotate(-90)">3</text><path d="M216 245.7h3"/><path d="M214.500 254.6h6"/><path d="M216 263.5h3"/><text stroke="none" text-anchor="middle" transform="translate(221.300 271.7) rotate(-90)">4</text><path d="M216 281.2h3"/><path d="M214.500 290.1h6"/><path d="M216 299.0h3"/><text stroke="none" text-anchor="middle" transform="translate(221.300 307.3) rotate(-90)">5</text><path d="M216 316.7h3"/><path d="M214.500 325.6h6"/><path d="M216 334.5h3"/><text stroke="none" text-anchor="middle" transform="translate(221.300 342.8) rotate(-90)">6</text><path d="M216 352.2h3"/><path d="M214.500 361.1h6"/><path d="M216 370.0h3"/><text stroke="none" text-anchor="middle" transform="translate(221.300 378.3) rotate(-90)">7</text><path d="M216 387.8h3"/><path d="M214.500 396.6h6"/><path d="M216 405.5h3"/><text stroke="none" text-anchor="middle" transform="translate(221.300 413.8) rotate(-90)">8</text><path d="M216 423.3h3"/><path d="M214.500 432.2h6"/><path d="M216 441.0h3"/><text stroke="none" text-anchor="middle" transform="translate(221.300 449.3) rotate(-90)">9</text><path d="M216 458.8h3"/><path d="M214.500 467.7h6"/><path d="M216 476.5h3"/><text stroke="none" text-anchor="middle" transform="translate(221.300 484.8) rotate(-90)">10</text><path d="M216 494.3h3"/><path d="M214.500 503.2h6"/><path d="M216 512.1h3"/><text stroke="none" text-anchor="middle" transform="translate(221.300 520.3) rotate(-90)">11</text><path d="M216 529.8h3"/><path d="M214.500 538.7h6"/><path d="M216 547.6h3"/><text stroke="none" text-anchor="middle" transform="translate(221.300 555.8) rotate(-90)">12</text><path d="M216 565.3h3"/><path d="M214.500 574.2h6"/><path d="M216 583.1h3"/><text stroke="none" text-anchor="middle" transform="translate(221.300 591.4) rotate(-90)">13</text><path d="M216 600.8h3"/><path d="M214.500 609.7h6"/><path d="M216 618.6h3"/><text stroke="none" text-anchor="middle" transform="translate(221.300 626.9) rotate(-90)">14</text><path d="M216 636.3h3"/></svg>
<div class="abs" id="slide"><div class="stitle">Our Growing Presence</div>
<div class="bl" style="top:79.2px">Lorem ipsum dolor sit amet, consectetuer adipiscing elit.</div>
<div class="bl" style="top:106.2px"><b>Maecenas porttitor</b> congue massa. Fusce posuere, magna sed</div>
<div class="bl" style="top:133.2px">pulvinar ultricies, purus lectus malesuada libero, sit amet</div>
<div class="bl last" style="top:160.2px">commodo magna eros quis urna. Nunc viverra imperdiet enim.</div>
<div class="bl" style="top:187.2px"><b>Lorem ipsum dolor sit amet</b>, consectetuer adipiscing elit.</div>
<div class="bl" style="top:214.2px">Maecenas porttitor congue massa. Fusce posuere, magna sed</div>
<div class="bl last" style="top:241.2px">pulvinar ultricies.</div>
<div class="bl" style="top:295.2px">Lorem ipsum dolor sit amet, consectetuer adipiscing elit.</div>
<div class="bl" style="top:322.2px"><b>Maecenas porttitor</b> congue massa. Fusce posuere, magna sed</div>
<div class="bl" style="top:349.2px">pulvinar ultricies, purus lectus malesuada libero, sit amet</div>
<div class="bl last" style="top:376.2px">commodo magna eros quis urna. Nunc viverra imperdiet enim.</div>
<div class="bl" style="top:403.2px"><b>Lorem ipsum dolor sit amet</b>, consectetuer adipiscing elit.</div>
<div class="bl" style="top:430.2px">Maecenas porttitor congue massa. Fusce posuere, magna sed</div>
<div class="bl last" style="top:457.2px">pulvinar ultricies.</div>
<svg class="abs" style="left:0;top:0" width="902" height="507" viewBox="0 0 902 507"><defs>
<clipPath id="indiaClip"><path d="M617.5 86.0L622.2 83.6L627.2 82.0L632.4 80.7L637.8 80.9L645.0 82.9L649.0 88.6L655.6 92.6L659.1 95.3L662.9 97.5L668.5 96.7L671.8 94.2L675.8 93.4L679.9 93.9L684.0 94.2L687.4 96.4L690.4 99.0L688.8 104.8L684.7 109.6L682.3 113.7L683.0 119.3L684.0 125.8L681.0 132.0L674.0 134.5L676.0 139.0L680.2 142.3L683.0 146.8L687.3 149.9L691.7 153.0L694.7 156.0L696.0 160.0L692.6 167.0L690.0 174.0L693.6 176.4L697.0 179.0L701.5 180.5L705.5 182.9L709.0 186.0L714.5 188.2L719.8 190.7L723.9 193.0L728.6 194.0L733.1 194.5L737.3 196.0L741.4 198.1L745.4 200.1L750.0 200.4L754.3 201.7L758.7 202.4L763.0 203.7L765.3 197.2L765.8 192.2L764.2 187.5L767.6 184.9L771.8 184.2L776.0 189.6L778.3 197.2L783.5 199.0L789.0 199.3L794.4 197.8L799.9 197.2L800.2 192.7L802.0 188.5L806.0 185.6L810.7 184.2L813.5 180.7L817.0 177.8L821.1 175.8L823.9 172.2L828.0 170.2L832.3 169.6L836.7 169.0L840.9 168.0L845.3 170.5L849.5 173.4L853.2 177.8L857.0 182.0L857.5 186.5L856.0 190.7L852.0 193.3L847.4 194.0L842.2 196.2L836.6 197.2L835.1 202.5L834.4 208.0L833.1 213.0L831.9 218.1L830.0 223.0L827.7 227.3L825.8 231.7L823.6 236.0L822.2 240.5L819.4 244.4L818.2 249.0L815.1 252.5L812.8 256.6L808.5 251.2L807.4 246.9L807.4 242.5L799.9 244.7L796.6 238.2L798.4 234.0L799.9 229.6L802.1 226.0L804.9 222.8L806.3 218.8L802.0 218.3L797.7 219.3L793.4 218.8L788.2 216.7L782.6 216.6L778.3 210.0L771.8 208.0L770.9 212.6L768.5 216.6L770.3 221.9L771.8 227.4L772.7 231.9L775.3 235.8L776.0 240.4L776.3 244.7L777.6 249.0L776.5 253.4L777.2 257.7L773.1 259.3L769.6 262.0L764.1 264.0L758.8 266.3L755.9 270.3L754.5 275.0L750.4 278.2L745.6 280.4L741.5 283.6L737.8 287.1L734.2 290.7L730.8 294.4L728.2 298.4L725.5 302.2L722.1 304.5L719.1 307.2L716.9 310.8L714.0 313.6L711.0 317.1L708.5 321.0L704.0 323.4L699.0 324.0L695.0 329.6L692.8 333.6L691.5 338.0L689.7 343.7L688.6 349.5L688.5 355.3L690.5 360.8L689.3 365.4L689.6 370.2L688.1 375.1L685.8 379.7L687.7 387.2L684.0 391.2L680.0 394.8L678.0 402.4L675.0 406.0L672.6 410.0L670.0 413.3L666.3 415.1L663.0 417.5L657.5 415.6L654.0 411.2L651.8 406.0L649.1 400.7L648.0 394.8L645.5 390.1L645.4 384.6L643.3 379.7L640.6 374.3L639.5 368.4L637.4 364.1L636.1 359.5L634.8 355.0L634.3 350.4L631.4 346.6L631.0 342.0L629.5 338.2L628.3 334.4L627.5 330.3L625.3 326.8L624.6 322.8L623.3 319.0L620.6 315.6L619.7 311.7L618.3 307.3L616.9 302.9L615.9 298.4L616.3 293.6L615.0 289.0L615.5 284.8L613.3 281.0L613.6 276.8L612.3 272.7L612.5 268.5L607.9 267.6L602.3 269.4L596.4 270.0L592.3 268.2L588.8 265.4L585.0 263.0L582.3 258.3L579.2 253.9L575.9 249.6L573.5 244.7L571.3 240.4L571.2 235.5L575.7 233.1L580.4 231.0L584.0 228.4L588.1 226.5L591.8 224.0L593.9 219.7L594.0 214.9L589.5 211.4L586.4 207.1L582.6 203.4L583.2 198.8L583.8 194.2L588.0 190.4L591.8 186.2L596.7 184.8L600.9 181.7L606.0 180.8L611.0 178.0L615.0 173.8L619.1 170.9L622.4 167.0L624.5 162.7L625.0 158.0L628.1 153.8L630.0 149.0L632.2 145.6L634.7 142.4L635.0 135.5L628.0 132.0L625.6 127.0L623.2 122.6L622.4 116.0L620.8 110.4L625.6 106.4L624.8 102.3L620.0 98.3L612.7 95.9L611.9 92.6L614.5 89.2Z"/></clipPath>
<filter id="mb0" x="-30%" y="-30%" width="160%" height="160%"><feGaussianBlur stdDeviation=".7"/></filter>
<filter id="mb1" x="-30%" y="-30%" width="160%" height="160%"><feGaussianBlur stdDeviation="1.500"/></filter>
<filter id="mb3" x="-30%" y="-30%" width="160%" height="160%"><feGaussianBlur stdDeviation="3.500"/></filter>
<filter id="mb8" x="-50%" y="-50%" width="200%" height="200%"><feGaussianBlur stdDeviation="8"/></filter>
<g id="india">
<path d="M617.5 86.0L622.2 83.6L627.2 82.0L632.4 80.7L637.8 80.9L645.0 82.9L649.0 88.6L655.6 92.6L659.1 95.3L662.9 97.5L668.5 96.7L671.8 94.2L675.8 93.4L679.9 93.9L684.0 94.2L687.4 96.4L690.4 99.0L688.8 104.8L684.7 109.6L682.3 113.7L683.0 119.3L684.0 125.8L681.0 132.0L674.0 134.5L676.0 139.0L680.2 142.3L683.0 146.8L687.3 149.9L691.7 153.0L694.7 156.0L696.0 160.0L692.6 167.0L690.0 174.0L693.6 176.4L697.0 179.0L701.5 180.5L705.5 182.9L709.0 186.0L714.5 188.2L719.8 190.7L723.9 193.0L728.6 194.0L733.1 194.5L737.3 196.0L741.4 198.1L745.4 200.1L750.0 200.4L754.3 201.7L758.7 202.4L763.0 203.7L765.3 197.2L765.8 192.2L764.2 187.5L767.6 184.9L771.8 184.2L776.0 189.6L778.3 197.2L783.5 199.0L789.0 199.3L794.4 197.8L799.9 197.2L800.2 192.7L802.0 188.5L806.0 185.6L810.7 184.2L813.5 180.7L817.0 177.8L821.1 175.8L823.9 172.2L828.0 170.2L832.3 169.6L836.7 169.0L840.9 168.0L845.3 170.5L849.5 173.4L853.2 177.8L857.0 182.0L857.5 186.5L856.0 190.7L852.0 193.3L847.4 194.0L842.2 196.2L836.6 197.2L835.1 202.5L834.4 208.0L833.1 213.0L831.9 218.1L830.0 223.0L827.7 227.3L825.8 231.7L823.6 236.0L822.2 240.5L819.4 244.4L818.2 249.0L815.1 252.5L812.8 256.6L808.5 251.2L807.4 246.9L807.4 242.5L799.9 244.7L796.6 238.2L798.4 234.0L799.9 229.6L802.1 226.0L804.9 222.8L806.3 218.8L802.0 218.3L797.7 219.3L793.4 218.8L788.2 216.7L782.6 216.6L778.3 210.0L771.8 208.0L770.9 212.6L768.5 216.6L770.3 221.9L771.8 227.4L772.7 231.9L775.3 235.8L776.0 240.4L776.3 244.7L777.6 249.0L776.5 253.4L777.2 257.7L773.1 259.3L769.6 262.0L764.1 264.0L758.8 266.3L755.9 270.3L754.5 275.0L750.4 278.2L745.6 280.4L741.5 283.6L737.8 287.1L734.2 290.7L730.8 294.4L728.2 298.4L725.5 302.2L722.1 304.5L719.1 307.2L716.9 310.8L714.0 313.6L711.0 317.1L708.5 321.0L704.0 323.4L699.0 324.0L695.0 329.6L692.8 333.6L691.5 338.0L689.7 343.7L688.6 349.5L688.5 355.3L690.5 360.8L689.3 365.4L689.6 370.2L688.1 375.1L685.8 379.7L687.7 387.2L684.0 391.2L680.0 394.8L678.0 402.4L675.0 406.0L672.6 410.0L670.0 413.3L666.3 415.1L663.0 417.5L657.5 415.6L654.0 411.2L651.8 406.0L649.1 400.7L648.0 394.8L645.5 390.1L645.4 384.6L643.3 379.7L640.6 374.3L639.5 368.4L637.4 364.1L636.1 359.5L634.8 355.0L634.3 350.4L631.4 346.6L631.0 342.0L629.5 338.2L628.3 334.4L627.5 330.3L625.3 326.8L624.6 322.8L623.3 319.0L620.6 315.6L619.7 311.7L618.3 307.3L616.9 302.9L615.9 298.4L616.3 293.6L615.0 289.0L615.5 284.8L613.3 281.0L613.6 276.8L612.3 272.7L612.5 268.5L607.9 267.6L602.3 269.4L596.4 270.0L592.3 268.2L588.8 265.4L585.0 263.0L582.3 258.3L579.2 253.9L575.9 249.6L573.5 244.7L571.3 240.4L571.2 235.5L575.7 233.1L580.4 231.0L584.0 228.4L588.1 226.5L591.8 224.0L593.9 219.7L594.0 214.9L589.5 211.4L586.4 207.1L582.6 203.4L583.2 198.8L583.8 194.2L588.0 190.4L591.8 186.2L596.7 184.8L600.9 181.7L606.0 180.8L611.0 178.0L615.0 173.8L619.1 170.9L622.4 167.0L624.5 162.7L625.0 158.0L628.1 153.8L630.0 149.0L632.2 145.6L634.7 142.4L635.0 135.5L628.0 132.0L625.6 127.0L623.2 122.6L622.4 116.0L620.8 110.4L625.6 106.4L624.8 102.3L620.0 98.3L612.7 95.9L611.9 92.6L614.5 89.2Z" fill="#fff" stroke="#a9c9f5" stroke-width="4" stroke-linejoin="round" filter="url(#mb0)"/>
<g clip-path="url(#indiaClip)">
<rect x="557" y="74" width="310" height="350" fill="#f1e9dd"/>
<g filter="url(#mb3)">
<rect x="605.0" y="75.0" width="36" height="66" fill="#d9b791" />
<rect x="637.0" y="81.0" width="10" height="60" fill="#d5d7da" />
<rect x="645.0" y="85.0" width="48" height="40" fill="#e9dcc6" />
<rect x="665.0" y="131.0" width="40" height="44" fill="#e6c59d" />
<rect x="627.0" y="165.0" width="100" height="30" fill="#e2bd93" />
<rect x="617.0" y="137.0" width="30" height="40" fill="#d8c0a4" />
<rect x="657.0" y="203.0" width="110" height="90" fill="#f3ecda" />
<rect x="627.0" y="199.0" width="34" height="90" fill="#fcfaf2" />
<rect x="582.0" y="184.0" width="45" height="50" fill="#efeae3" />
<rect x="822.0" y="165.0" width="40" height="18" fill="#e6ddd2" />
<rect x="762.0" y="181.0" width="30" height="50" fill="#dfe8f0" />
<rect x="613.0" y="277.0" width="34" height="30" fill="#cfa67c" />
<rect x="667.0" y="305.0" width="30" height="30" fill="#dfe6ec" />
<rect x="673.0" y="309.0" width="20" height="22" fill="#d8aa7a" />
<rect x="665.0" y="343.0" width="28" height="50" fill="#dba569" />
</g>
<g filter="url(#mb1)">
<rect x="659.0" y="205.0" width="2.2" height="70" fill="#e3d6bd" /><rect x="664.0" y="205.0" width="2.2" height="70" fill="#e3d6bd" /><rect x="669.0" y="205.0" width="2.2" height="70" fill="#e3d6bd" /><rect x="674.0" y="205.0" width="2.2" height="70" fill="#e3d6bd" /><rect x="679.0" y="205.0" width="2.2" height="70" fill="#e3d6bd" /><rect x="684.0" y="205.0" width="2.2" height="70" fill="#e3d6bd" /><rect x="689.0" y="205.0" width="2.2" height="70" fill="#e3d6bd" /><rect x="694.0" y="205.0" width="2.2" height="70" fill="#e3d6bd" /><rect x="699.0" y="205.0" width="2.2" height="70" fill="#e3d6bd" /><rect x="704.0" y="205.0" width="2.2" height="70" fill="#e3d6bd" /><rect x="709.0" y="205.0" width="2.2" height="70" fill="#e3d6bd" /><rect x="714.0" y="205.0" width="2.2" height="70" fill="#e3d6bd" /><rect x="719.0" y="205.0" width="2.2" height="70" fill="#e3d6bd" /><rect x="724.0" y="205.0" width="2.2" height="70" fill="#e3d6bd" /><rect x="729.0" y="205.0" width="2.2" height="70" fill="#e3d6bd" /><rect x="734.0" y="205.0" width="2.2" height="70" fill="#e3d6bd" /><rect x="739.0" y="205.0" width="2.2" height="70" fill="#e3d6bd" /><rect x="744.0" y="205.0" width="2.2" height="70" fill="#e3d6bd" /><rect x="749.0" y="205.0" width="2.2" height="70" fill="#e3d6bd" /><rect x="754.0" y="205.0" width="2.2" height="70" fill="#e3d6bd" /><rect x="759.0" y="205.0" width="2.2" height="70" fill="#e3d6bd" /><rect x="764.0" y="205.0" width="2.2" height="70" fill="#e3d6bd" />
<path d="M616.0 85.0L627.0 81.0L639.0 80.0L639.0 83.5L621.0 87.0L621.0 98.0L617.0 97.0Z" fill="#33261e" />
<rect x="647.0" y="95.0" width="34" height="36" fill="#b0c2d4" />
<rect x="649.0" y="101.0" width="14" height="26" fill="#8190a2" />
<rect x="667.0" y="109.0" width="16" height="18" fill="#66717f" />
<path d="M657.0 127.0L665.0 127.0L663.0 181.0L657.0 181.0Z" fill="#3a4048" />
<path d="M657.0 144.0L649.0 181.0L653.0 181.0L661.0 149.0Z" fill="#444b55" />
<rect x="671.0" y="153.0" width="18" height="9" fill="#f1efea" />
<rect x="663.0" y="165.0" width="7" height="12" fill="#e9e7e2" />
<rect x="663.0" y="203.0" width="20" height="60" fill="#dcc4a3" />
<ellipse cx="689.0" cy="259.0" rx="26" ry="28" fill="#5873ab" />
<path d="M663.0 253.0L716.0 247.0L717.0 281.0L661.0 283.0Z" fill="#5470a8" />
<ellipse cx="691.5" cy="225.0" rx="9" ry="13" fill="#cf9a78" />
<path d="M681.0 217.0L682.0 206.0L692.0 201.0L702.0 205.0L703.0 218.0L698.0 212.0L687.0 212.0Z" fill="#6a4426" />
<ellipse cx="691.0" cy="233.0" rx="7" ry="4" fill="#8a5a3c" />
<ellipse cx="734.0" cy="214.0" rx="10.5" ry="13" fill="#d4a88e" />
<path d="M725.0 241.0L747.0 231.0L775.0 249.0L773.0 265.0L737.0 295.0L707.0 313.0L701.0 299.0L721.0 279.0Z" fill="#efe9e3" />
<path d="M697.0 273.0L719.0 269.0L723.0 279.0L701.0 283.0Z" fill="#c9916d" />
<path d="M633.0 267.0L647.0 255.0L653.0 279.0L635.0 283.0Z" fill="#cbb89a" />
<ellipse cx="637.0" cy="235.0" rx="6" ry="14" fill="#c9d3a6" />
<ellipse cx="603.0" cy="231.0" rx="8.5" ry="15" fill="#8d5a38" />
<ellipse cx="607.0" cy="235.0" rx="4" ry="8" fill="#d2a283" />
<path d="M575.0 239.0L593.0 243.0L601.0 249.0L615.0 245.0L615.0 271.0L587.0 271.0L579.0 259.0Z" fill="#252e4a" />
<path d="M599.0 247.0L607.0 243.0L605.0 267.0L599.0 269.0Z" fill="#f1efec" />
<path d="M627.0 285.0L697.0 277.0L709.0 299.0L637.0 309.0Z" fill="#97a1b3" />
<path d="M637.0 293.0L679.0 289.0L683.0 301.0L643.0 305.0Z" fill="#c4c8cf" />
<path d="M787.0 205.0L855.0 183.0L857.0 191.0L789.0 215.0Z" fill="#f6f4f1" />
<path d="M785.0 195.0L823.0 187.0L825.0 194.0L787.0 203.0Z" fill="#d8ab8b" />
<path d="M801.0 209.0L835.0 201.0L829.0 229.0L817.0 253.0L805.0 253.0Z" fill="#b1c0d2" />
<rect x="767.0" y="187.0" width="12" height="30" fill="#cfdbe6" />
<ellipse cx="649.0" cy="335.0" rx="16" ry="22" fill="#5a3b20" />
<ellipse cx="639.0" cy="343.0" rx="9" ry="14" fill="#6a4626" />
<ellipse cx="659.0" cy="339.0" rx="7.5" ry="11" fill="#cf9f7c" />
<ellipse cx="647.0" cy="321.0" rx="12" ry="9" fill="#4a2f18" />
<path d="M633.0 357.0L653.0 351.0L671.0 365.0L683.0 393.0L675.0 417.0L649.0 421.0L641.0 389.0Z" fill="#0f0f10" />
<rect x="672.0" y="357.0" width="8" height="16" fill="#1d4f58" />
<ellipse cx="681.0" cy="331.0" rx="6" ry="5" fill="#3b4556" />
<ellipse cx="681.0" cy="393.0" rx="7" ry="4" fill="#ead9c3" />
</g>
<g filter="url(#mb8)" opacity=".9">
<ellipse cx="623.0" cy="191.0" rx="24" ry="15" fill="#ffffff" />
<ellipse cx="653.0" cy="311.0" rx="22" ry="9" fill="#ffffff" />
<ellipse cx="715.0" cy="199.0" rx="10" ry="5" fill="#ffffff" />
</g>
</g>
</g>
</defs><use href="#india"/></svg></div>
<svg class="abs" style="left:0;top:0" width="1536" height="741" viewBox="0 0 1536 741"><rect x="972.5" y="211.5" width="288.0" height="336.0" fill="none" stroke="#4a8af4" stroke-width="1"/><path d="M1116.5 211.5V189" stroke="#4a8af4" stroke-width="1"/><circle cx="1116.5" cy="188.600" r="3.400" fill="#1a73e8" stroke="#fff" stroke-width=".6"/><rect x="969.0" y="208.0" width="7" height="7" fill="#1a73e8" stroke="#fff" stroke-width=".6"/><rect x="1113.0" y="208.0" width="7" height="7" fill="#1a73e8" stroke="#fff" stroke-width=".6"/><rect x="1257.0" y="208.0" width="7" height="7" fill="#1a73e8" stroke="#fff" stroke-width=".6"/><rect x="969.0" y="376.0" width="7" height="7" fill="#1a73e8" stroke="#fff" stroke-width=".6"/><rect x="1257.0" y="376.0" width="7" height="7" fill="#1a73e8" stroke="#fff" stroke-width=".6"/><rect x="969.0" y="544.0" width="7" height="7" fill="#1a73e8" stroke="#fff" stroke-width=".6"/><rect x="1113.0" y="544.0" width="7" height="7" fill="#1a73e8" stroke="#fff" stroke-width=".6"/><rect x="1257.0" y="544.0" width="7" height="7" fill="#1a73e8" stroke="#fff" stroke-width=".6"/></svg>
<div class="abs" id="notes"></div>
<div class="abs" style="left:211px;top:654px;width:1271px;height:1px;background:#eaecee"></div>
<div class="abs" style="left:211px;top:662px;width:1271px;height:1px;background:#eceef0"></div>
<div class="abs" style="left:837.300px;top:657px;width:3px;height:3px;border-radius:1.500px;background:#d9dbdf"></div><div class="abs" style="left:844.900px;top:657px;width:3px;height:3px;border-radius:1.500px;background:#d9dbdf"></div><div class="abs" style="left:852.500px;top:657px;width:3px;height:3px;border-radius:1.500px;background:#d9dbdf"></div>
<div class="abs" style="left:227px;top:673.900px;font-size:15.300px;line-height:18px;color:#2b2c2f;white-space:nowrap">Click to add speaker notes</div>
<div class="abs" style="left:1431px;top:697px;width:35px;height:36px;border:1px solid #dadce0;border-radius:4px;background:#f8f9fa"></div>
<svg class="abs" style="left:1439.500px;top:705.500px" width="18" height="20" viewBox="0 0 18 20"><path d="M2 0h14a2 2 0 0 1 2 2v13a2 2 0 0 1-2 2h-4l-3 3-3-3H2a2 2 0 0 1-2-2V2a2 2 0 0 1 2-2z" fill="#5f6368"/><path d="M9 2.300l1.700 4.500 4.500 1.700-4.500 1.700L9 14.700l-1.700-4.500-4.500-1.700 4.500-1.700z" fill="#fff"/></svg>
<div class="abs" id="side"></div><div class="abs" id="sideborder"></div>
<svg class="abs" style="left:1501.500px;top:81px" width="18" height="18" viewBox="0 0 18 18">
<rect x="0" y="0" width="18" height="18" rx="1.500" fill="#fff"/>
<path d="M1.500 0H14.200V3.800H3.800V14.200H0V1.500A1.500 1.500 0 0 1 1.500 0z" fill="#4285f4"/>
<path d="M14.200 0H16.500A1.500 1.500 0 0 1 18 1.500V3.800H14.200z" fill="#1967d2"/>
<path d="M14.200 3.800H18V14.200H14.200z" fill="#fbbc04"/>
<path d="M0 14.200H3.800V18H1.500A1.500 1.500 0 0 1 0 16.500z" fill="#188038"/>
<path d="M3.800 14.200H14.200V18H3.800z" fill="#34a853"/>
<path d="M14.200 14.200H18L14.200 18z" fill="#ea4335"/>
<text x="9" y="11.800" text-anchor="middle" font-family="Liberation Sans,sans-serif" font-weight="bold" font-size="7.500" fill="#4285f4">31</text></svg>
<svg class="abs" style="left:1501.500px;top:135px" width="18" height="18" viewBox="0 0 18 18"><rect width="18" height="18" rx="1.500" fill="#fbbc04"/><path d="M9 3.800a3.600 3.600 0 0 0-2 6.600v1.300h4v-1.300a3.600 3.600 0 0 0-2-6.600zM7.300 12.600h3.400v1.200H7.300z" fill="#fff"/></svg>
<svg class="abs" style="left:1501.500px;top:188.500px" width="18" height="18" viewBox="0 0 18 18" fill="none"><circle cx="8.500" cy="9.700" r="6.300" stroke="#1a73e8" stroke-width="2.400"/><path d="M5.500 9.500l2.400 2.400 5-5" stroke="#1a73e8" stroke-width="2.200"/><circle cx="15" cy="3.600" r="2.300" fill="#1a73e8"/></svg>
<svg class="abs" style="left:1503.300px;top:242.500px" width="14.500" height="16.500" viewBox="0 0 17 18" preserveAspectRatio="none"><circle cx="8.500" cy="4.200" r="3.400" fill="#1a73e8"/><path d="M1.500 17.500v-4.200c0-2.600 3.500-4.300 7-4.300s7 1.700 7 4.300v4.200z" fill="#1a73e8"/><path d="M1.500 17.500v-4.200c0-1 .5-1.900 1.400-2.600L6 17.500z" fill="#185abc"/></svg>
<svg class="abs" style="left:1505px;top:296.500px" width="11.300" height="16.200" viewBox="0 0 13 19"><path d="M6.500 0A6.500 6.500 0 0 0 0 6.500C0 11 6.500 19 6.500 19S13 11 13 6.500A6.500 6.500 0 0 0 6.500 0z" fill="#34a853"/><path d="M6.500 0A6.500 6.500 0 0 0 .9 3.200L6.500 9z" fill="#ea4335"/><path d="M6.500 0v9l5.300-5.900A6.500 6.500 0 0 0 6.500 0z" fill="#4285f4"/><path d="M.9 3.200A6.500 6.500 0 0 0 .6 9.500L6.500 6.500z" fill="#fbbc04"/><path d="M11.800 3.100L2.500 13.700 6.500 19S13 11 13 6.500a6.500 6.500 0 0 0-1.200-3.400z" fill="#34a853"/><circle cx="6.500" cy="6.500" r="2.300" fill="#fff"/></svg>
<div class="abs" style="left:1500px;top:347px;width:20px;height:1px;background:#dadce0"></div>
<div class="abs" style="left:1504px;top:389px;width:13px;height:2px;background:#202124"></div><div class="abs" style="left:1509.500px;top:383.500px;width:2px;height:13px;background:#202124"></div>
<svg class="abs" style="left:1499.500px;top:704px" width="18" height="18" viewBox="0 0 24 24" fill="#5f6368"><path d="M10 6L8.590 7.410 13.170 12l-4.580 4.590L10 18l6-6z"/></svg>
<div class="abs" id="bottomline"></div>
</body>
</html>
